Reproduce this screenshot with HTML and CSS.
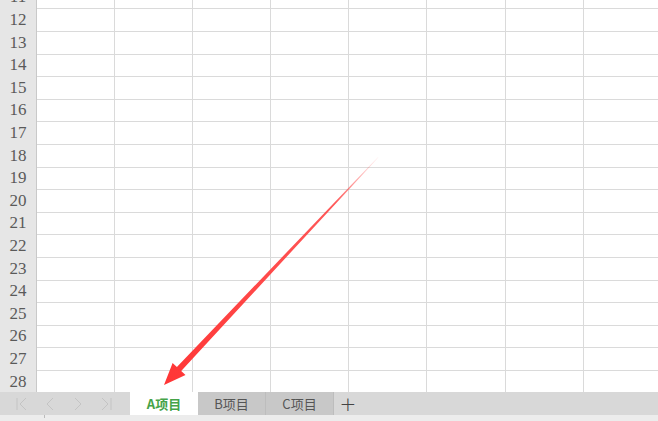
FILE: index.html
```html
<!DOCTYPE html>
<html>
<head>
<meta charset="utf-8">
<link rel="stylesheet" href="styles.css">
</head>
<body>
<div class="app">
  <div class="sheet">
    <div class="grid">
      <div class="row"><div class="hdr">11</div><div class="c"></div><div class="c"></div><div class="c"></div><div class="c"></div><div class="c"></div><div class="c"></div><div class="c"></div><div class="c"></div></div>
      <div class="row"><div class="hdr">12</div><div class="c"></div><div class="c"></div><div class="c"></div><div class="c"></div><div class="c"></div><div class="c"></div><div class="c"></div><div class="c"></div></div>
      <div class="row"><div class="hdr">13</div><div class="c"></div><div class="c"></div><div class="c"></div><div class="c"></div><div class="c"></div><div class="c"></div><div class="c"></div><div class="c"></div></div>
      <div class="row"><div class="hdr">14</div><div class="c"></div><div class="c"></div><div class="c"></div><div class="c"></div><div class="c"></div><div class="c"></div><div class="c"></div><div class="c"></div></div>
      <div class="row"><div class="hdr">15</div><div class="c"></div><div class="c"></div><div class="c"></div><div class="c"></div><div class="c"></div><div class="c"></div><div class="c"></div><div class="c"></div></div>
      <div class="row"><div class="hdr">16</div><div class="c"></div><div class="c"></div><div class="c"></div><div class="c"></div><div class="c"></div><div class="c"></div><div class="c"></div><div class="c"></div></div>
      <div class="row"><div class="hdr">17</div><div class="c"></div><div class="c"></div><div class="c"></div><div class="c"></div><div class="c"></div><div class="c"></div><div class="c"></div><div class="c"></div></div>
      <div class="row"><div class="hdr">18</div><div class="c"></div><div class="c"></div><div class="c"></div><div class="c"></div><div class="c"></div><div class="c"></div><div class="c"></div><div class="c"></div></div>
      <div class="row"><div class="hdr">19</div><div class="c"></div><div class="c"></div><div class="c"></div><div class="c"></div><div class="c"></div><div class="c"></div><div class="c"></div><div class="c"></div></div>
      <div class="row"><div class="hdr">20</div><div class="c"></div><div class="c"></div><div class="c"></div><div class="c"></div><div class="c"></div><div class="c"></div><div class="c"></div><div class="c"></div></div>
      <div class="row"><div class="hdr">21</div><div class="c"></div><div class="c"></div><div class="c"></div><div class="c"></div><div class="c"></div><div class="c"></div><div class="c"></div><div class="c"></div></div>
      <div class="row"><div class="hdr">22</div><div class="c"></div><div class="c"></div><div class="c"></div><div class="c"></div><div class="c"></div><div class="c"></div><div class="c"></div><div class="c"></div></div>
      <div class="row"><div class="hdr">23</div><div class="c"></div><div class="c"></div><div class="c"></div><div class="c"></div><div class="c"></div><div class="c"></div><div class="c"></div><div class="c"></div></div>
      <div class="row"><div class="hdr">24</div><div class="c"></div><div class="c"></div><div class="c"></div><div class="c"></div><div class="c"></div><div class="c"></div><div class="c"></div><div class="c"></div></div>
      <div class="row"><div class="hdr">25</div><div class="c"></div><div class="c"></div><div class="c"></div><div class="c"></div><div class="c"></div><div class="c"></div><div class="c"></div><div class="c"></div></div>
      <div class="row"><div class="hdr">26</div><div class="c"></div><div class="c"></div><div class="c"></div><div class="c"></div><div class="c"></div><div class="c"></div><div class="c"></div><div class="c"></div></div>
      <div class="row"><div class="hdr">27</div><div class="c"></div><div class="c"></div><div class="c"></div><div class="c"></div><div class="c"></div><div class="c"></div><div class="c"></div><div class="c"></div></div>
      <div class="row last"><div class="hdr">28</div><div class="c"></div><div class="c"></div><div class="c"></div><div class="c"></div><div class="c"></div><div class="c"></div><div class="c"></div><div class="c"></div></div>
    </div>
    <svg class="arrow" width="658" height="392" viewBox="0 0 658 392">
      <defs>
        <linearGradient id="g" x1="378" y1="157" x2="164" y2="385" gradientUnits="userSpaceOnUse">
          <stop offset="0" stop-color="#ff3b3b" stop-opacity="0.05"/>
          <stop offset="0.2" stop-color="#ff3b3b" stop-opacity="0.85"/>
          <stop offset="1" stop-color="#ff3535"/>
        </linearGradient>
      </defs>
      <polygon fill="url(#g)" points="378,157 378.4,157.4 181.2,371.0 185.5,375.0 164,385 172.6,363.0 176.9,366.9"/>
    </svg>
  </div>
  <div class="tabbar">
    <div class="nav">
      <svg width="14" height="14" viewBox="0 0 14 14"><path d="M2 1v12M11 1L5 7l6 6" fill="none" stroke="#c4c4c4" stroke-width="1"/></svg>
      <svg width="14" height="14" viewBox="0 0 14 14"><path d="M10 1L4 7l6 6" fill="none" stroke="#c4c4c4" stroke-width="1"/></svg>
      <svg width="14" height="14" viewBox="0 0 14 14"><path d="M4 1l6 6-6 6" fill="none" stroke="#c4c4c4" stroke-width="1"/></svg>
      <svg width="14" height="14" viewBox="0 0 14 14"><path d="M3 1l6 6-6 6M12 1v12" fill="none" stroke="#c4c4c4" stroke-width="1"/></svg>
    </div>
    <div class="tabs">
      <div class="tab active">A项目</div>
      <div class="tab">B项目</div>
      <div class="tab">C项目</div>
      <div class="add">+</div>
    </div>
  </div>
  <div class="status"><span class="tick"></span></div>
</div>
</body>
</html>
```

FILE: styles.css
```css
html, body {
  margin: 0;
  padding: 0;
  background: #ffffff;
}
.app {
  width: 658px;
  height: 421px;
  overflow: hidden;
  display: flex;
  flex-direction: column;
  font-family: "Noto Sans CJK SC", "Noto Sans", sans-serif;
}
.sheet {
  position: relative;
  height: 392px;
  overflow: hidden;
  flex: none;
}
.grid {
  margin-top: -14.6px;
  display: flex;
  flex-direction: column;
}
.row {
  display: grid;
  grid-template-columns: 37px repeat(8, 78.1px);
  height: 22.6px;
  flex: none;
}
.hdr {
  background: #e6e6e6;
  border-right: 1px solid #c9c9c9;
  border-bottom: 1px solid #d2d2d2;
  box-sizing: border-box;
  font-family: "Liberation Serif", "DejaVu Serif", serif;
  font-size: 17px;
  color: #5a5a5a;
  text-align: center;
  line-height: 23px;
}
.c {
  border-right: 1px solid #dadada;
  border-bottom: 1px solid #dadada;
  box-sizing: border-box;
}
.row.last .c, .row.last .hdr {
  border-bottom: none;
}
.arrow {
  position: absolute;
  left: 0;
  top: 0;
}
.tabbar {
  height: 23px;
  background: #d8d8d8;
  display: flex;
  align-items: stretch;
  flex: none;
}
.nav {
  width: 130px;
  display: flex;
  align-items: center;
  gap: 14px;
  padding-left: 15px;
  box-sizing: border-box;
}
.nav svg {
  display: block;
}
.tabs {
  display: flex;
  align-items: stretch;
}
.tab {
  width: 68px;
  display: flex;
  align-items: center;
  justify-content: center;
  background: #c8c8c8;
  color: #555555;
  font-size: 13px;
  border-right: 1px solid #bdbdbd;
  box-sizing: border-box;
}
.tab.active {
  background: #ffffff;
  color: #45a348;
  font-weight: bold;
  border-right: none;
}
.add {
  width: 28px;
  display: flex;
  align-items: center;
  justify-content: center;
  font-family: "DejaVu Sans", sans-serif;
  font-size: 20px;
  font-weight: 300;
  color: #444444;
  line-height: 1;
}
.status {
  flex: 1;
  background: #ececec;
  position: relative;
}
.tick {
  display: block;
  margin-left: 44px;
  width: 1px;
  height: 3px;
  background: #bbbbbb;
}
```
